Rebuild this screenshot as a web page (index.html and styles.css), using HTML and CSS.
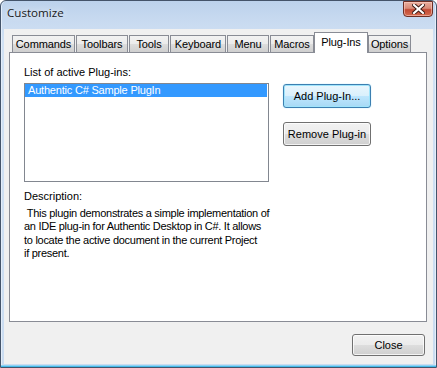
FILE: index.html
```html
<!DOCTYPE html>
<html>
<head>
<meta charset="utf-8">
<link rel="stylesheet" href="styles.css">
</head>
<body>
<div class="window">
  <div class="titlebar">
    <span class="title">Customize</span>
    <button class="close-x" aria-label="Close">
      <svg width="13" height="10" viewBox="0 0 13 10">
        <path d="M2 1 L11 9 M11 1 L2 9" stroke="#3a1812" stroke-width="4" stroke-linecap="square"/>
        <path d="M2 1 L11 9 M11 1 L2 9" stroke="#ffffff" stroke-width="2.2" stroke-linecap="square"/>
      </svg>
    </button>
  </div>
  <div class="client">
    <div class="tabs">
      <div class="tab t-commands">Commands</div>
      <div class="tab t-toolbars">Toolbars</div>
      <div class="tab t-tools">Tools</div>
      <div class="tab t-keyboard">Keyboard</div>
      <div class="tab t-menu">Menu</div>
      <div class="tab t-macros">Macros</div>
      <div class="tab selected t-plugins">Plug-Ins</div>
      <div class="tab t-options">Options</div>
    </div>
    <div class="panel">
      <div class="label">List of active Plug-ins:</div>
      <div class="list-row">
        <div class="listbox">
          <div class="item selected-item">Authentic C# Sample PlugIn</div>
        </div>
        <div class="side-buttons">
          <button class="btn default">Add Plug-In...</button>
          <button class="btn">Remove Plug-in</button>
        </div>
      </div>
      <div class="label desc-label">Description:</div>
      <div class="description">&nbsp;This plugin demonstrates a simple implementation of<br>an IDE plug-in for Authentic Desktop in C#. It allows<br>to locate the active document in the current Project<br>if present.</div>
    </div>
    <button class="btn close-btn">Close</button>
  </div>
</div>
</body>
</html>
```

FILE: styles.css
```css
html, body {
  margin: 0;
  padding: 0;
  background: #ffffff;
}

.window {
  box-sizing: border-box;
  width: 437px;
  height: 368px;
  border: 1px solid #44546a;
  border-radius: 6px 6px 0 0;
  padding: 0 3px 3px 3px;
  display: flex;
  flex-direction: column;
  background: linear-gradient(to bottom, #bcd2ec 0px, #c8daf0 20px, #d0e1f4 40px, #cadcf1 100%);
  box-shadow: inset 0 -1px 0 #46b9ea, inset 0 -2px 0 #8fd3f2, inset 1px 0 0 #e4eefa, inset -1px 0 0 #e4eefa;
}

.titlebar {
  height: 28px;
  flex: 0 0 28px;
  display: flex;
  justify-content: space-between;
  align-items: flex-start;
}

.title {
  font-family: "Open Sans", "Noto Sans", sans-serif;
  font-size: 11.6px;
  color: #1a1a1a;
  padding-left: 3px;
  line-height: 14px;
  margin-top: 5px;
  text-shadow: 0 0 6px rgba(255,255,255,0.9);
}

.close-x {
  width: 30px;
  height: 16px;
  margin: 0;
  padding: 0;
  border: 1px solid #6d2f25;
  border-radius: 0 0 4px 4px;
  background: linear-gradient(to bottom, #e8ad9d 0%, #d88a77 45%, #c24a34 55%, #d46b4f 100%);
  box-shadow: inset 0 0 0 1px rgba(255,210,200,0.55);
  display: flex;
  align-items: center;
  justify-content: center;
}

.close-x svg {
  display: block;
}

.client {
  flex: 1;
  background: #f0f0f0;
  display: flex;
  flex-direction: column;
  padding: 3px 6px 0 5px;
  font-family: "Liberation Sans", Arial, sans-serif;
  font-size: 11px;
  color: #000;
}

.tabs {
  display: flex;
  align-items: flex-end;
  height: 20px;
  padding-left: 3px;
  position: relative;
  z-index: 1;
}

.tab {
  box-sizing: border-box;
  height: 17px;
  border: 1px solid #898c95;
  border-bottom: none;
  margin-right: 1px;
  background: linear-gradient(to bottom, #f2f2f2 0%, #ebebeb 50%, #dddddd 51%, #cfcfcf 100%);
  text-align: center;
  line-height: 16px;
  white-space: nowrap;
  letter-spacing: -0.1px;
}

.tab.selected {
  height: 21px;
  margin: 0 0 -1px -1px;
  background: #ffffff;
  line-height: 18px;
}

.t-commands { width: 63px; }
.t-toolbars { width: 52px; }
.t-tools { width: 40px; }
.t-keyboard { width: 56px; }
.t-menu { width: 42px; }
.t-macros { width: 44px; }
.t-plugins { width: 54px; }
.t-options { width: 43px; }

.panel {
  box-sizing: border-box;
  height: 270px;
  flex: 0 0 270px;
  border: 1px solid #898c95;
  background: #ffffff;
  padding: 13px 0 0 14px;
}

.label {
  line-height: 13px;
  height: 13px;
}

.list-row {
  display: flex;
  align-items: flex-start;
  margin-top: 4px;
}

.listbox {
  box-sizing: border-box;
  width: 245px;
  height: 99px;
  border: 1px solid #828790;
  padding: 0 1px 0 0;
  background: #fff;
}

.item {
  height: 13px;
  line-height: 13px;
  padding-left: 3px;
  white-space: nowrap;
  letter-spacing: -0.2px;
}

.selected-item {
  background: #3399ff;
  color: #ffffff;
}

.side-buttons {
  display: flex;
  flex-direction: column;
  gap: 14px;
  margin: 1px 0 0 14px;
}

.btn {
  box-sizing: border-box;
  width: 88px;
  height: 24px;
  margin: 0;
  padding: 0;
  font-family: "Liberation Sans", Arial, sans-serif;
  font-size: 11px;
  color: #000;
  border: 1px solid #707070;
  border-radius: 3px;
  background: linear-gradient(to bottom, #f2f2f2 0%, #ebebeb 50%, #dddddd 51%, #cfcfcf 100%);
  box-shadow: inset 0 0 0 1px rgba(255,255,255,0.75);
  text-align: center;
}

.btn.default {
  border-color: #3c7fb1;
  background: linear-gradient(to bottom, #eaf6fd 0%, #d9f0fc 50%, #bee6fd 51%, #a7d9f5 100%);
  box-shadow: inset 0 0 0 1px #9fe4fb, 0 0 1px #6ccff7;
}

.desc-label {
  margin-top: 8px;
}

.description {
  margin-top: 4px;
  line-height: 13.34px;
  white-space: nowrap;
  letter-spacing: -0.28px;
}

.close-btn {
  align-self: flex-end;
  width: 73px;
  height: 22px;
  margin: 12px 2px 0 0;
}
```
